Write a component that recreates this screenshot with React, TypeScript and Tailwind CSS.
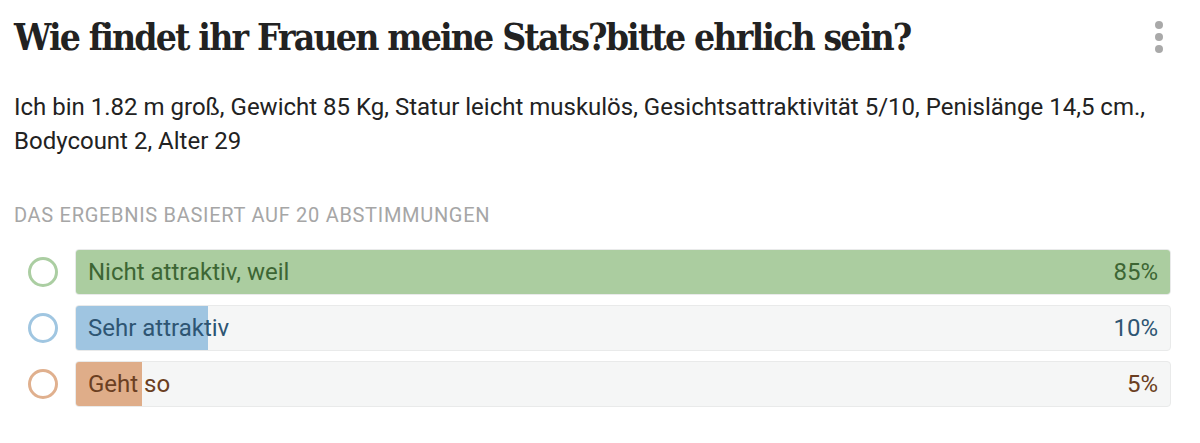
import React from "react";

const options = [
  { label: "Nicht attraktiv, weil", pct: "85%", fill: "w-full", bar: "bg-[#abcda0]", text: "text-[#3d6634]", ring: "border-[#abcea2]" },
  { label: "Sehr attraktiv", pct: "10%", fill: "w-[132px]", bar: "bg-[#9fc5e1]", text: "text-[#2e5573]", ring: "border-[#a0c6e1]" },
  { label: "Geht so", pct: "5%", fill: "w-[66px]", bar: "bg-[#dfad89]", text: "text-[#6b3f22]", ring: "border-[#e0b08e]" },
];

export default function App() {
  return (
    <div className="w-[1200px] h-[443px] bg-white overflow-hidden" style={{ fontFamily: "Roboto, 'Liberation Sans', sans-serif" }}>
      <div className="flex items-start justify-between pl-[14px] pr-[37px] pt-[14px]">
        <h1
          className="text-[37px] leading-[46px] font-bold text-[#222] tracking-[-1.85px] whitespace-nowrap"
          style={{ fontFamily: "'DejaVu Serif Condensed', 'DejaVu Serif', serif", fontStretch: "condensed" }}
        >
          Wie findet ihr Frauen meine Stats?bitte ehrlich sein?
        </h1>
        <div className="flex flex-col gap-[4px] pt-[7px]">
          <span className="w-[8px] h-[8px] rounded-full bg-[#a9a9a9]" />
          <span className="w-[8px] h-[8px] rounded-full bg-[#a9a9a9]" />
          <span className="w-[8px] h-[8px] rounded-full bg-[#a9a9a9]" />
        </div>
      </div>
      <p className="px-[14px] pt-[30px] pr-[30px] text-[24px] leading-[34px] text-[#222]">
        Ich bin 1.82 m groß, Gewicht 85 Kg, Statur leicht muskulös, Gesichtsattraktivität 5/10, Penislänge 14,5 cm., Bodycount 2, Alter 29
      </p>
      <div className="px-[14px] pt-[45px] text-[20px] leading-[24px] tracking-[0.7px] text-[#a6a6a6] uppercase">
        Das Ergebnis basiert auf 20 Abstimmungen
      </div>
      <div className="flex flex-col gap-[10px] pt-[22px] pl-[28px] pr-[29px]">
        {options.map((o) => (
          <div key={o.label} className="flex items-center gap-[17px]">
            <span className={`w-[30px] h-[30px] rounded-full border-[3px] ${o.ring} shrink-0`} />
            <div className="relative flex-1 h-[46px] rounded-[4px] border border-[#e9eaea] bg-[#f5f6f6] overflow-hidden">
              <div className={`absolute left-0 top-0 bottom-0 ${o.fill} ${o.bar}`} />
              <div className={`relative flex items-center justify-between h-full pl-[12px] pr-[12px] text-[24px] ${o.text}`}>
                <span>{o.label}</span>
                <span>{o.pct}</span>
              </div>
            </div>
          </div>
        ))}
      </div>
    </div>
  );
}
